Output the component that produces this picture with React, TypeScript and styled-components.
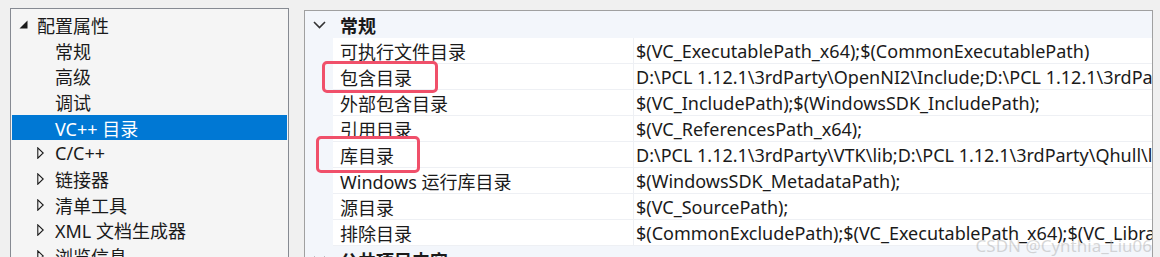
import styled, { createGlobalStyle } from 'styled-components';

const GlobalStyle = createGlobalStyle`
  html, body {
    margin: 0;
    padding: 0;
    background-color: #f0f0f0;
  }

  body {
    font-family: 'Noto Sans', 'Noto Sans CJK SC', sans-serif;
    font-size: 18px;
    color: #1a1a1a;
  }
`;

const Page = styled.div`
  width: 1160px;
  height: 257px;
  overflow: hidden;

  display: flex;
  align-items: flex-start;
  gap: 15px;

  padding: 8px 0 0 10px;
  box-sizing: border-box;
`;

const TreePanel = styled.div`
  width: 279px;
  height: 300px;
  flex-shrink: 0;
  box-sizing: border-box;

  display: flex;
  flex-direction: column;

  padding: 3px 1px 0 1px;
  background-color: #f5f5f5;
  border: 1px solid #868a92;
`;

const TreeRow = styled.div<{ selected?: boolean; indent: number }>`
  height: 25.7px;
  flex-shrink: 0;

  display: flex;
  align-items: center;

  padding-left: ${({ indent }) => indent}px;
  background-color: ${({ selected }) => (selected ? '#0078d4' : 'transparent')};
  color: ${({ selected }) => (selected ? '#ffffff' : '#1a1a1a')};
  white-space: nowrap;
`;

const Toggle = styled.span`
  width: 18px;
  flex-shrink: 0;

  display: flex;
  align-items: center;
`;

const GridPanel = styled.div`
  width: 849px;
  height: 300px;
  margin-top: 2px;
  flex-shrink: 0;
  box-sizing: border-box;

  position: relative;

  display: flex;
  flex-direction: column;

  background-color: #f3f6fb;
  border: 1px solid #a0a0a0;
  overflow: hidden;
`;

const SectionHeader = styled.div`
  height: 27px;
  flex-shrink: 0;

  display: flex;
  align-items: center;

  padding-left: 8px;
  font-weight: 700;
`;

const Chevron = styled.span`
  width: 27px;
  flex-shrink: 0;

  display: flex;
  align-items: center;
`;

const PropRow = styled.div`
  height: 26px;
  flex-shrink: 0;
  box-sizing: border-box;

  display: grid;
  grid-template-columns: 28px 300px 1fr;
`;

const Gutter = styled.div`
  background-color: #f3f6fb;
`;

const Cell = styled.div<{ value?: boolean }>`
  display: flex;
  align-items: center;

  padding-left: ${({ value }) => (value ? '2px' : '7px')};
  background-color: #ffffff;
  border-bottom: 1px solid #eef0f4;
  border-left: ${({ value }) => (value ? '1px solid #eef0f4' : 'none')};
  white-space: nowrap;
  overflow: hidden;
`;

const Highlight = styled.div<{ left: number; top: number; w: number; h: number }>`
  position: absolute;
  left: ${({ left }) => left}px;
  top: ${({ top }) => top}px;
  width: ${({ w }) => w}px;
  height: ${({ h }) => h}px;
  box-sizing: border-box;

  border: 3px solid #f0506a;
  border-radius: 5px;
  pointer-events: none;
`;

const Watermark = styled.div`
  position: absolute;
  right: 0;
  bottom: 52px;

  font-family: 'Noto Sans', sans-serif;
  font-size: 17px;
  color: rgba(175, 175, 175, 0.5);
  white-space: nowrap;
  pointer-events: none;
`;

function ExpandedIcon() {
  return (
    <svg width="9" height="9" viewBox="0 0 9 9">
      <path d="M8.5 0.5 L8.5 8.5 L0.5 8.5 Z" fill="#1a1a1a" />
    </svg>
  );
}

function CollapsedIcon() {
  return (
    <svg width="7" height="12" viewBox="0 0 7 12">
      <path d="M0.8 0.8 L6.2 6 L0.8 11.2 Z" fill="none" stroke="#1a1a1a" strokeWidth="1.1" />
    </svg>
  );
}

function ChevronDown() {
  return (
    <svg width="13" height="8" viewBox="0 0 13 8">
      <path d="M1 1 L6.5 6.5 L12 1" fill="none" stroke="#333" strokeWidth="1.6" />
    </svg>
  );
}

const treeItems = [
  { label: '配置属性', indent: 7, icon: 'open' },
  { label: '常规', indent: 43 },
  { label: '高级', indent: 43 },
  { label: '调试', indent: 43 },
  { label: 'VC++ 目录', indent: 43, selected: true },
  { label: 'C/C++', indent: 25, icon: 'closed' },
  { label: '链接器', indent: 25, icon: 'closed' },
  { label: '清单工具', indent: 25, icon: 'closed' },
  { label: 'XML 文档生成器', indent: 25, icon: 'closed' },
  { label: '浏览信息', indent: 25, icon: 'closed' },
];

const props = [
  ['可执行文件目录', '$(VC_ExecutablePath_x64);$(CommonExecutablePath)'],
  ['包含目录', 'D:\\PCL 1.12.1\\3rdParty\\OpenNI2\\Include;D:\\PCL 1.12.1\\3rdParty\\FLANN\\include'],
  ['外部包含目录', '$(VC_IncludePath);$(WindowsSDK_IncludePath);'],
  ['引用目录', '$(VC_ReferencesPath_x64);'],
  ['库目录', 'D:\\PCL 1.12.1\\3rdParty\\VTK\\lib;D:\\PCL 1.12.1\\3rdParty\\Qhull\\lib'],
  ['Windows 运行库目录', '$(WindowsSDK_MetadataPath);'],
  ['源目录', '$(VC_SourcePath);'],
  ['排除目录', '$(CommonExcludePath);$(VC_ExecutablePath_x64);$(VC_LibraryPath_x64)'],
];

function App() {
  return (
    <>
      <GlobalStyle />
      <Page>
        <TreePanel>
          {treeItems.map((item) => (
            <TreeRow key={item.label} indent={item.indent} selected={item.selected}>
              {item.icon === 'open' && (
                <Toggle>
                  <ExpandedIcon />
                </Toggle>
              )}
              {item.icon === 'closed' && (
                <Toggle>
                  <CollapsedIcon />
                </Toggle>
              )}
              {item.label}
            </TreeRow>
          ))}
        </TreePanel>
        <GridPanel>
          <SectionHeader>
            <Chevron>
              <ChevronDown />
            </Chevron>
            常规
          </SectionHeader>
          {props.map(([label, value]) => (
            <PropRow key={label}>
              <Gutter />
              <Cell>{label}</Cell>
              <Cell value>{value}</Cell>
            </PropRow>
          ))}
          <SectionHeader>
            <Chevron>
              <ChevronDown />
            </Chevron>
            公共项目内容
          </SectionHeader>
          <Highlight left={17} top={50} w={116} h={32} />
          <Highlight left={11} top={125} w={104} h={37} />
          <Watermark>CSDN @Cynthia_Liu06</Watermark>
        </GridPanel>
      </Page>
    </>
  );
}

export default App;
